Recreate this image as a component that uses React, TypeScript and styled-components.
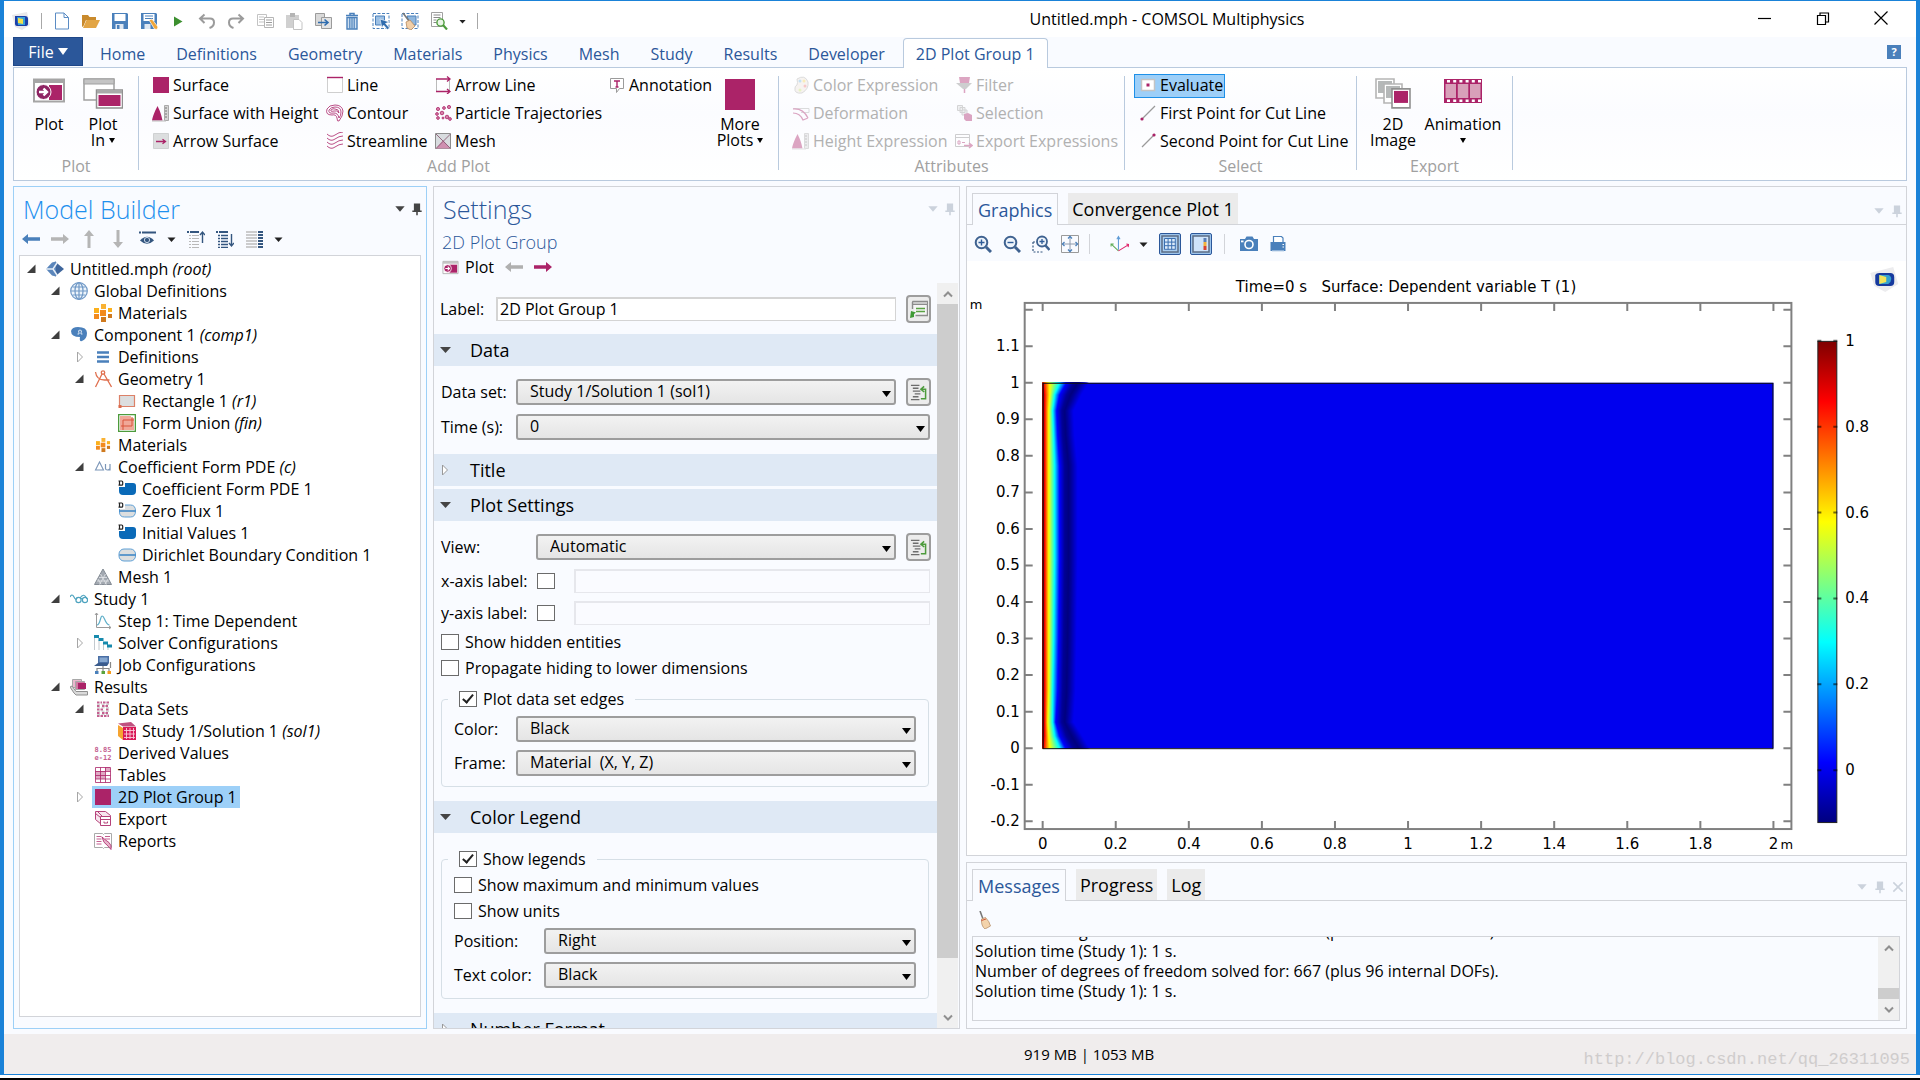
import React, { ReactNode, useId, useState } from "react";
import styled, { createGlobalStyle, css } from "styled-components";

const ui = `"Open Sans", "Noto Sans", "Segoe UI", sans-serif`;
const plotFont = `"DejaVu Sans", Verdana, sans-serif`;
const M = "#ab2368";
const B = "#4a80bb";
const N = "#34567f";
const G = "#9b9b9b";
const LINE = "#b9cade";
const GRAY_LINE = "#d2d4d9";

const Global = createGlobalStyle`
  *, *::before, *::after { box-sizing: border-box; }
  html, body, #root { height: 100%; }
  body { margin: 0; font-family: ${ui}; font-size: 16px; line-height: 20px; color: #000; background: #000; overflow: hidden; }
  button, input, select { font: inherit; color: inherit; }
  button { background: none; border: 0; padding: 0; cursor: default; }
  svg { display: block; flex: none; }
`;

/* ---------- icons ---------- */

const cube = (x: number, y: number, s: number, c: string, k: string) => (
  <rect key={k} x={x} y={y} width={s} height={s} fill={c} />
);

const materials = (
  <>
    {cube(7, 0, 5, "#f9b233", "a")}
    {cube(0, 4, 5, "#fbb01c", "b")}
    {cube(14, 4, 4, "#fbb01c", "c")}
    {cube(6, 6, 6, "#f28a1d", "d")}
    {cube(0, 10, 5, "#f28a1d", "e")}
    {cube(14, 10, 4, "#cf7a1f", "f")}
    {cube(7, 13, 5, "#cf7a1f", "g")}
  </>
);

const domainD = (
  <>
    <rect x="0" y="0" width="7" height="7" fill="#fff" />
    <path d="M.5 1h3.200a1 1 0 0 1 1 1v2.200a1 1 0 0 1-1 1H.5M1.500 1v4.500" fill="none" stroke="#222" strokeWidth="1.200" />
  </>
);

const gridLines = (n: number, w: number, step: number, off: number) =>
  Array.from({ length: n }, (_, i) => `M${off + i * step} ${off}v${w}M${off} ${off + i * step}h${w}`).join("");

const icons: Record<string, ReactNode> = {
  logo: (
    <>
      <path d="M0 3l15-3 3 13-8 5-7-3z" fill="#e8e8ea" />
      <path d="M3 4h10q3 0 3 3v5q0 2-3 2H5q-2 0-2-2z" fill="#1c3fa8" />
      <path d="M5 5h8v8H6z" fill="#37a0d8" />
      <path d="M6 6l5 1v5l-5-1z" fill="#f4e04a" />
    </>
  ),
  file: (
    <path d="M2.500 1h8.500l4.500 4.500V17h-13zM11 1v4.500h4.500" fill="#fff" stroke="#5b8cc4" />
  ),
  open: (
    <>
      <path d="M0 3h6l1.500 2H14v3H4L1.500 14 0 15z" fill="#c98a2c" />
      <path d="M4.500 8H18l-4 8H1z" fill="#e2a545" />
    </>
  ),
  save: (
    <>
      <path d="M1 1h15l1 1v15H1z" fill={B} />
      <path d="M3.500 2h11v7h-11z" fill="#fff" />
      <path d="M4.500 12h8v5h-8z" fill="#dfe8f2" />
      <path d="M6 13h2.500v4H6z" fill={B} />
    </>
  ),
  saveAs: (
    <>
      <path d="M1 1h15l1 1v15H1z" fill={B} />
      <path d="M3.500 2h11v7h-11z" fill="#fff" />
      <path d="M5 4h8M5 6.500h8" stroke={B} />
      <path d="M4.500 12h6v5h-6z" fill="#dfe8f2" />
      <path d="M9 8l3-1 6 8-1 2.500-2.500-.5z" fill="#f0a63a" stroke="#fff" strokeWidth=".7" />
    </>
  ),
  play: <path d="M5 4.500l8.500 5L5 14.500z" fill="#3c8f2f" />,
  undo: <path d="M6.500 2.500L2 6.500l4.500 4.500M2.500 6.500H12q4 0 4 4 0 4-4.500 5.500" fill="none" stroke={G} strokeWidth="2" />,
  redo: <path d="M11.500 2.500L16 6.500l-4.500 4.500M15.500 6.500H6q-4 0-4 4 0 4 4.500 5.500" fill="none" stroke={G} strokeWidth="2" />,
  copy: (
    <>
      <path d="M1.500 2.500h9v11h-9z" fill="#fff" stroke="#c3c3c3" />
      <path d="M3 5h5M3 7.500h5M3 10h5" stroke="#c3c3c3" />
      <path d="M8.500 5.500h9v10h-9z" fill="#fff" stroke="#b5b5b5" />
      <path d="M10 8h6M10 10.500h6M10 13h6" stroke={G} />
    </>
  ),
  paste: (
    <>
      <path d="M1 3h13v13H1z" fill="#d0d0d0" />
      <path d="M5 1h5v4H5z" fill="#b5b5b5" />
      <path d="M8.500 7.500h5.500l3 3v7H8.500z" fill="#fff" stroke="#c3c3c3" />
    </>
  ),
  duplicate: (
    <>
      <path d="M1.500 1.500h9v12h-9z" fill="#d9d9d9" stroke={G} />
      <path d="M7.500 5.500h10v11h-10z" fill="#e4e4e4" stroke={G} />
      <path d="M4 10.500h9M10.500 7.500l3.500 3-3.500 3" fill="none" stroke="#2f6cae" strokeWidth="1.600" />
    </>
  ),
  trash: (
    <>
      <path d="M3 3.500h12M7 3V1.500h4V3" fill="none" stroke={B} strokeWidth="1.500" />
      <path d="M4 5.500h10V17H4z" fill="#cfe0f1" stroke={B} strokeWidth="1.400" />
      <path d="M6.800 6v10.500M9 6v10.500M11.200 6v10.500" stroke={B} strokeWidth="1.200" />
    </>
  ),
  select: (
    <>
      <path d="M1 1.500h16v15H1z" fill="none" stroke={B} strokeDasharray="3 1.500" />
      <path d="M3.500 4h9v9h-9z" fill="#9cc0e4" stroke={B} />
      <path d="M8 7l9 3-3.500 1.500 4 4.500-2 1.500-4-4.500L10 16z" fill="#2f6cae" stroke="#fff" strokeWidth=".6" />
    </>
  ),
  clearSel: (
    <>
      <path d="M1 1.500h16v15H1z" fill="none" stroke={B} strokeDasharray="3 1.500" />
      <path d="M6 4h9v9h-6z" fill="#8fb6dd" stroke={B} />
      <path d="M2 1l6 8" stroke="#777" strokeWidth="1.500" />
      <path d="M5 10l4-2 5 6-4 4-4-2z" fill="#f1cfa8" stroke="#b48a62" strokeWidth=".8" />
    </>
  ),
  find: (
    <>
      <path d="M1.500.5h11v14h-11z" fill="#fff" stroke="#a0a0a0" />
      <path d="M3.500 3h7M3.500 5.500h7M3.500 8h3M3.500 10.500h3" stroke="#888" />
      <circle cx="10.500" cy="10.500" r="3.600" fill="#e9f5e6" stroke="#4d9b3c" strokeWidth="1.400" />
      <path d="M13 13l4 4.500" stroke="#4d9b3c" strokeWidth="2.200" />
    </>
  ),
  caret: <path d="M1 5h16L9 14z" fill="#222" />,
  surface: <rect x="1" y="1" width="16" height="16" fill={M} />,
  surfHeight: (
    <>
      <path d="M0 16.500C1 12 2 9 5.500 2 9 9 9.500 12 10.500 16.500z" fill={M} />
      <path d="M12.500 1.500h4v15h-4z" fill="#d5d5d5" stroke="#aaa" />
      <path d="M13 4h2M13 7h2M13 10h2M13 13h2" stroke="#777" />
      <path d="M0 17h14" stroke="#bbb" />
    </>
  ),
  arrowSurf: (
    <>
      <path d="M1.500 1.500h15v15h-15z" fill="#dcdedf" stroke="#cfd1d2" />
      <path d="M4 9.500h9M10.500 7.200l3 2.300-3 2.300" fill="none" stroke={M} strokeWidth="1.300" />
    </>
  ),
  line: (
    <>
      <path d="M1.500 1.500h15v15h-15z" fill="#fff" stroke="#cfcfcf" />
      <path d="M1 1.500h16" stroke={M} strokeWidth="1.400" />
    </>
  ),
  contour: (
    <g fill="none" stroke={M} strokeWidth=".8">
      <path d="M1 5q2-4 8-4 7 0 8 6 0 5-4 10-2 1-2-3-1-4-5-3-7 0-5-6z" />
      <path d="M3 6q2-3 6-3 6 0 6 5 0 4-2 6-1-5-5-5-6 1-5-3z" />
      <path d="M5 6q2-2 4-1 4 0 4 4-2-3-5-2-4 1-3-1z" />
    </g>
  ),
  streamline: (
    <g fill="none" stroke={M} strokeWidth=".8">
      {[3, 7, 11, 15].map((y) => (
        <path key={y} d={`M1 ${y - 1}q4 4 8 1t8-3`} />
      ))}
    </g>
  ),
  arrowLine: (
    <>
      <path d="M2.500 3v12M15.500 3v12" stroke="#bbb" />
      <path d="M2 3h13M2 15.500h13M13 .5l3 2.500-3 2.500M13 13l3 2.500-3 2.500" fill="none" stroke={M} strokeWidth="1.300" />
    </>
  ),
  particle: (
    <g fill="#d680a8" stroke={M} strokeWidth=".8">
      <circle cx="4" cy="5" r="1.600" /><circle cx="10" cy="4" r="1.400" /><circle cx="15" cy="3" r="1.600" />
      <circle cx="3" cy="10" r="1.400" /><circle cx="8" cy="9" r="1.800" /><circle cx="13" cy="13" r="1.800" />
      <circle cx="4" cy="14" r="1.400" /><circle cx="16" cy="15" r="1.400" /><circle cx="9" cy="14" r="1" />
    </g>
  ),
  mesh: (
    <>
      <path d="M1.500 1.500h15v15h-15z" fill="#d8dcdf" stroke="#8d8d8d" />
      <path d="M2 16.500L9 8l7.500 8.500z" fill="#cf8fb0" />
      <path d="M2 2l14.500 14.500M16.500 2L2 16.500" stroke="#8b5c75" strokeWidth=".9" />
    </>
  ),
  annotation: (
    <>
      <path d="M2.500 2.500h13v10h-4l-3 4v-4h-6z" fill="#fff" stroke={G} />
      <path d="M6 5h6M9 5v6M7.500 11h3" stroke={M} strokeWidth="1.400" />
    </>
  ),
  colorExp: (
    <>
      <path d="M5 3q8-5 11 3 1 7-6 11-8 1-7-5 0-2 2-3 1-2 0-6z" fill="#eee4dc" stroke="#aaa" />
      <circle cx="8" cy="5" r="1.500" fill="#6fb6e6" /><circle cx="12" cy="5" r="1.500" fill="#f3d24d" />
      <circle cx="13" cy="10" r="1.500" fill="#e77" /><circle cx="8" cy="14" r="1.500" fill="#c7e36a" />
    </>
  ),
  deformation: (
    <>
      <path d="M1 4.500h16v4H9" fill="none" stroke="#aaa" />
      <path d="M1 5q10-1 15 9M1 9q7 0 10 7l5-2" fill="none" stroke={M} strokeWidth="1.200" />
    </>
  ),
  filter: (
    <>
      <path d="M4 1h11l-1 6H5z" fill={M} />
      <path d="M1 7h16l-6 6H8z" fill="#888" />
      <path d="M9.500 13v4" stroke={M} strokeWidth="1.500" />
    </>
  ),
  selection: (
    <>
      <path d="M2.500 1.500h5v5h-5zM5 3.500h5v5H5zM7 6h5v5H7z" fill="#ddd" stroke="#999" />
      <path d="M9 10l4-1 4 2v6h-6l-2-2z" fill={M} />
    </>
  ),
  exportExp: (
    <>
      <path d="M.5 2.500h14v12H.5z" fill="#fff" stroke="#888" />
      <path d="M1 5.500h13" stroke="#888" />
      <path d="M3 9h2v3H3zM7 10.500h3" fill="none" stroke={M} />
      <path d="M9 13.500h7M14 11l3 2.500-3 2.500" fill="none" stroke={M} strokeWidth="1.500" />
    </>
  ),
  evaluate: (
    <>
      <path d="M2.500 3.500h13v11h-13z" fill="#fff" stroke="#c4c4c4" strokeWidth="1.500" />
      <rect x="7.500" y="7.500" width="3" height="3" fill={M} />
    </>
  ),
  firstPoint: (
    <>
      <path d="M3 15L16 2" stroke="#9a9a9a" strokeWidth="1.200" />
      <circle cx="3" cy="15" r="1.600" fill={M} />
    </>
  ),
  secondPoint: (
    <>
      <path d="M3 15L16 2" stroke="#9a9a9a" strokeWidth="1.200" />
      <circle cx="15" cy="3" r="1.600" fill={M} />
    </>
  ),
  back: <path d="M0 9l6-5v3.200h12v3.600H6V14z" fill="currentColor" />,
  fwd: <path d="M18 9l-6-5v3.200H0v3.600h12V14z" fill="currentColor" />,
  up: <path d="M9 0L4 6h3.500v12h3V6H14z" fill="currentColor" />,
  down: <path d="M9 18L4 12h3.500V0h3v12H14z" fill="currentColor" />,
  eye: (
    <>
      <path d="M1 2.500h2M4 2.500h14" stroke={N} strokeWidth="2" />
      <path d="M2 10.500Q9 3 16 10.500 9 17 2 10.500z" fill={N} />
      <circle cx="9" cy="10" r="2.600" fill={N} stroke="#cbd8e8" />
    </>
  ),
  collapseUp: (
    <>
      <path d="M0 2h2M3 2h9" stroke={N} strokeWidth="2" />
      <path d="M2 5.500h10M2 8.500h10M2 11.500h10M2 14.500h10M2 17.500h10" stroke="#b9b9b9" strokeDasharray="2 1 20" />
      <path d="M15.500 13V2M13 5l2.500-3L18 5" fill="none" stroke={N} strokeWidth="1.400" />
    </>
  ),
  expandDown: (
    <>
      <path d="M0 2h2M3 2h9" stroke={N} strokeWidth="2" />
      <path d="M2 5.500h10M2 8.500h10M2 11.500h10M2 14.500h10M2 17.500h10" stroke={N} strokeWidth="1.300" strokeDasharray="2 1 20" />
      <path d="M15.500 4v12M13 13l2.500 3 2.500-3" fill="none" stroke={N} strokeWidth="1.400" />
    </>
  ),
  columns: (
    <>
      <path d="M1 2h11M1 5h11M1 8h11M1 11h11M1 14h11M1 17h11" stroke="#bdbdbd" strokeWidth="1.500" />
      <path d="M13 2h5M13 5h5M13 8h5M13 11h5M13 14h5M13 17h5" stroke={N} strokeWidth="1.800" />
    </>
  ),
  root: (
    <>
      <path d="M9 1.500L18 9l-9 7.500z" fill="#3f669c" />
      <path d="M0 9l6-6.500 4-1v15l-4-1z" fill="#5b86bb" />
      <path d="M0 9h7l4-6M7 9l4 6" fill="none" stroke="#e6eef7" strokeWidth="1.500" />
    </>
  ),
  globe: (
    <g fill="none" stroke="#6f98c6" strokeWidth="1.200">
      <circle cx="9" cy="9" r="8.300" fill="#edf4fb" />
      <path d="M1 9h16M9 1v16M2.500 5h13M2.500 13h13" />
      <ellipse cx="9" cy="9" rx="4" ry="8.300" />
    </g>
  ),
  materials,
  materialsSmall: <g transform="translate(2 2) scale(.78)">{materials}</g>,
  component: (
    <>
      <path d="M1 5q1-4 7-4 9 0 9 6 0 6-5 8-3 1-2-4-9 0-9-6z" fill={B} />
      <path d="M7.500 8h1.500v-1q-1.500-3 1-3t1 3v1h1.500" fill="none" stroke="#dbe7f4" />
    </>
  ),
  definitions: <path d="M3 4.500h12M3 9h12M3 13.500h12" stroke={B} strokeWidth="2.600" />,
  geometry: (
    <g fill="none" stroke="#e0704f" strokeWidth="1.300">
      <circle cx="9" cy="2.500" r="1.700" />
      <path d="M8 4L1.500 17M10 4l7.500 13M1.500 2q1 8 9 8h5" />
    </g>
  ),
  rectangle: (
    <>
      <path d="M1.500 3.500h15v11h-15z" fill="#dcdedf" stroke="#dc8168" strokeWidth="1.200" />
      <rect x=".5" y="13" width="3" height="3" fill="#dc6a4a" />
    </>
  ),
  formUnion: (
    <>
      <path d="M.5.5h17v17H.5z" fill="#fff" stroke="#4d9b3c" strokeWidth="1.600" />
      <path d="M2 2h11v2h3v12H2z" fill="#f0a898" />
      <path d="M3 12h11V3M5 16V6h11" fill="none" stroke="#d9553a" />
    </>
  ),
  deltaU: (
    <>
      <path d="M1.500 12L5.500 4l4 8z" fill="none" stroke="#7b96b8" strokeWidth="1.100" />
      <path d="M11.500 6v4.500q0 1.500 2 1.500t2.500-1.500V6v6.500" fill="none" stroke="#7b96b8" strokeWidth="1.200" />
    </>
  ),
  domain: (
    <>
      <path d="M1 5q0-2 3-2h11q3 0 3 3v5q0 4-4 4H5q-4 0-4-4z" fill="#0a6ab8" />
      {domainD}
    </>
  ),
  flux: (
    <>
      <path d="M1.500 6q0-3 4-3h7q5 0 5 6t-5 6h-6q-5 0-5-5z" fill="#dcdedf" stroke="#5fa0d6" />
      <path d="M1.500 9h16" stroke="#1c74c0" strokeWidth="1.300" />
      {domainD}
    </>
  ),
  dirichlet: (
    <>
      <rect x="1" y="3" width="16.500" height="12" rx="5" fill="#dcdedf" stroke="#5fa0d6" />
      <path d="M1.500 9h16" stroke="#1c74c0" strokeWidth="1.300" />
    </>
  ),
  meshTree: (
    <>
      <path d="M9 1L.5 16.500h17z" fill="#a3a9b1" stroke="#848b94" />
      <path d="M6.500 6l6 10.500M4 11l3 5.500M11.500 6l-6 10.500M14 11l-3 5.500M5 9.500h8M3 13h12" stroke="#e3e6ea" strokeWidth=".8" />
    </>
  ),
  study: (
    <g fill="none" stroke="#4ea3bf" strokeWidth="1.200">
      <path d="M0 7q2-4 4 0t3 1" />
      <circle cx="8.500" cy="10" r="2.600" />
      <circle cx="15" cy="10" r="2.600" />
      <path d="M11 9q.8-1 1.500 0M10 8q4-6 7 1" />
    </g>
  ),
  timeDep: (
    <>
      <path d="M2.500 1v14.500H17M1 3l1.500-2L4 3M15 14l2 1.500-2 1.500" fill="none" stroke="#9a9a9a" />
      <path d="M3 13q2 0 3.500-6t4 0 5 6" fill="none" stroke="#5fafc9" strokeWidth="1.200" />
    </>
  ),
  solver: (
    <>
      <path d="M.5 4v12M5 6v10M9.500 9v7M14 12v4" stroke="#c3c9ce" />
      <path d="M0 1h5v3H0zM4.500 4h5v3h-5zM9 7.500h5v3H9zM13 10.500h5v3h-5z" fill="#178aad" />
    </>
  ),
  job: (
    <>
      <path d="M4 0h11v7H4z" fill="#4a6fa5" /><path d="M5.500 1.500h8v4.500h-8z" fill="#86a7cf" />
      <path d="M0 10l4-3h11l-2 3z" fill="#3a5b8c" />
      <path d="M16.500 6v6M3 15v-2.500h12V15M9 10v5" fill="none" stroke="#888" strokeWidth="1.200" />
      <path d="M1 15h3.500v3H1z" fill={B} /><path d="M7.500 15H11v3H7.500z" fill="#5aa33c" /><path d="M13.500 15H17v3h-3.500z" fill="#f59b1c" />
    </>
  ),
  results: (
    <>
      <path d="M2.500 1.500h9v8h-9z" fill="#e9b8ce" stroke="#a8a8a8" />
      <path d="M5.500 3.500h9v8h-9z" fill="#d27ba4" stroke="#a8a8a8" />
      <path d="M8 5h8v6H8z" fill={M} />
      <path d="M0 9l4 6 2 2h11.500v-3.500H6L2 8z" fill="#dadada" stroke="#909090" />
    </>
  ),
  dataSets: (
    <>
      <path d="M3 2.500h5M9 2.500h6M3 6h3M8 6h7M3 9.500h7M12 9.500h3M3 13h3M8 13h7M3 16h12" stroke="#c45f90" strokeWidth="1.800" strokeDasharray="2.500 1" />
      <path d="M3 4.300h12M3 7.800h12M3 11.200h12M3 14.600h12" stroke="#b9b9b9" strokeWidth=".8" strokeDasharray="3 1.500" />
    </>
  ),
  solution: (
    <>
      <path d="M0 3l5 3v12l-5-4z" fill="#f6a431" />
      <path d="M0 1.500L13 0l5 4.500H5z" fill="#c0517f" />
      <path d="M5 5h13v13H5z" fill="#d91a57" />
      <path d="M8.500 6v11M12 6v11M15.500 6v11M6 8.500h11M6 12h11M6 15.500h11" stroke="#f9cbd9" strokeWidth=".9" />
    </>
  ),
  derived: (
    <text x="9" y="8" textAnchor="middle" fontFamily="DejaVu Sans Mono, monospace" fontSize="7" fontWeight="700" fill="#c4608f">
      8.85
      <tspan x="9" y="16">e-12</tspan>
    </text>
  ),
  tables: (
    <>
      <path d="M1 1h16v16H1z" fill="#fff" />
      <path d="M1 5h5v8H1zM6 5h5v8H6zM11 1h5v4h-5z" fill="#d894b5" opacity=".8" />
      <path d="M1.500 1.500h15v15h-15zM6.500 1.500v15M11.500 1.500v15M1.500 5.500h15M1.500 9.500h15M1.500 13h15" fill="none" stroke={M} strokeWidth=".8" />
    </>
  ),
  exportTree: (
    <g fill="#f7e6ee" stroke="#b5427a">
      <path d="M1.500 1.500h10l5 4v9h-9l-6-5z" />
      <path d="M6.500 6.500h10v9h-10z" fill="#fff" />
      <path d="M6.500 9.500h10M10 11.500v1.500h3.500v-1.500M1.500 3.500l5 4M3.500 1.500l5 5" fill="none" />
    </g>
  ),
  reports: (
    <>
      <path d="M.5 1.500h8l1 1 1-1h7v14h-7l-1 1-1-1h-8z" fill="#fff" stroke="#aaa" />
      <path d="M2.500 4.500h5M2.500 7h5M2.500 9.500h5M2.500 12h5M11 4.500h5M11 7h5" stroke="#c45f90" />
      <path d="M8 5q1 6 6 9l3 3.500q1-4-2-7-3-2-7-5.500z" fill="#e7b4cb" stroke={M} strokeWidth=".8" />
    </>
  ),
  plotSmall: (
    <>
      <path d="M1 2.500h16v13H1z" fill="#fff" stroke="#b5b5b5" />
      <path d="M1 3h16v2H1z" fill="#c4c4c4" />
      <path d="M8 6h8v8.500H8z" fill={M} />
      <circle cx="6" cy="10" r="4" fill={M} stroke="#fff" strokeWidth=".8" />
      <path d="M3.500 10h4M6 8l2 2-2 2" fill="none" stroke="#fff" strokeWidth="1.100" />
    </>
  ),
  rename: (
    <>
      <path d="M2.500 1.500h15v14h-12" fill="#f5f5f5" stroke="#8c8c8c" strokeWidth="1.400" />
      <path d="M2.500 1.500h15v3h-15z" fill="#c9c9c9" stroke="#8c8c8c" />
      <path d="M2.500 2v7" stroke="#8c8c8c" strokeWidth="1.400" />
      <path d="M6 8.500h9M6 11.500h9" stroke="#5aa343" strokeWidth="1.300" />
      <path d="M0 18l1-7 5 1.500-2 1.500 0 3z" fill="#3f9b35" />
    </>
  ),
  goTo: (
    <>
      <path d="M1 1.500h9M3 4.500h6M3 7.500h8M5 10.500h6M3 13.500h6M1 16.500h9" stroke="#6d6d6d" strokeWidth="1.400" />
      <path d="M11.500 15.500h5v-10h-4M15 2.500l-3.500 3 3.500 3" fill="none" stroke="#4d9b3c" strokeWidth="1.600" />
    </>
  ),
  zoomIn: (
    <>
      <circle cx="7.500" cy="7.500" r="5.800" fill="#eef4fb" stroke="#3f6290" strokeWidth="2" />
      <path d="M4.500 7.500h6M7.500 4.500v6" stroke="#2f5c98" strokeWidth="1.400" />
      <path d="M12 12l5 5" stroke="#3f6290" strokeWidth="3" />
    </>
  ),
  zoomOut: (
    <>
      <circle cx="7.500" cy="7.500" r="5.800" fill="#eef4fb" stroke="#3f6290" strokeWidth="2" />
      <path d="M4.500 7.500h6" stroke="#2f5c98" strokeWidth="1.400" />
      <path d="M12 12l5 5" stroke="#3f6290" strokeWidth="3" />
    </>
  ),
  zoomBox: (
    <>
      <path d="M1 7v10h11M1 7h4" fill="none" stroke={N} strokeDasharray="2 1.500" strokeWidth="1.200" />
      <circle cx="10" cy="6.500" r="5" fill="#eef4fb" stroke="#3f6290" strokeWidth="1.800" />
      <path d="M7.500 6.500h5M10 4v5" stroke="#2f5c98" strokeWidth="1.300" />
      <path d="M13.500 10.500l4 4.500" stroke="#3f6290" strokeWidth="2.600" />
    </>
  ),
  zoomExtents: (
    <>
      <path d="M.5.5h17v17H.5z" fill="none" stroke="#9a9a9a" />
      <path d="M1 9h16M9 1v16" stroke="#8e9aab" />
      <path d="M7 3.500l2-2 2 2M7 14.500l2 2 2-2M3.500 7l-2 2 2 2M14.500 7l2 2-2 2" fill="none" stroke={B} strokeWidth="1.300" />
    </>
  ),
  axes: (
    <>
      <path d="M8 14V2M6.500 4L8 1.500 9.500 4" fill="none" stroke="#5e9bd6" />
      <path d="M8 15L1 8.500M1 11V8.500h2.500" fill="none" stroke="#5cab54" />
      <path d="M8 15l10-6M15.500 8.500L18 9l-1 2.500" fill="none" stroke="#e0246a" />
    </>
  ),
  gridOn: (
    <>
      <rect x="1" y="1" width="16" height="16" fill="#a9cdf0" stroke="#5c6c84" strokeWidth="1.500" />
      <path d="M3 3h12v12H3z" fill="#dcebfa" />
      <path d={gridLines(4, 11, 3.6, 3.5)} stroke="#3b6fb0" />
    </>
  ),
  legendOn: (
    <>
      <rect x="1" y="1" width="16" height="16" fill="#cfe4fb" stroke="#5c6c84" strokeWidth="1.500" />
      <path d="M11.500 3h3v4h-3z" fill="#5b7fb5" /><path d="M11.500 7h3v4h-3z" fill="#f3b23b" /><path d="M11.500 11h3v4h-3z" fill="#d8432f" />
    </>
  ),
  camera: (
    <>
      <path d="M0 4h5l1.500-2.500h6L14 4h4v12H0z" fill={B} />
      <circle cx="9" cy="9.500" r="4" fill={B} stroke="#fff" strokeWidth="1.600" />
      <rect x="1" y="5.500" width="2.500" height="1.800" fill="#fff" />
    </>
  ),
  printer: (
    <>
      <path d="M4.500 1.500h8l1.500 1.500v5h-9.500z" fill="#fff" stroke={B} strokeWidth="1.200" />
      <path d="M1.500 7h15v9h-15z" fill={B} />
      <path d="M3 15.500h12v1.500H3z" fill="#dbe7f4" />
      <path d="M13.500 9.500h1.500M13.500 12h1.500" stroke="#fff" strokeWidth="1.200" />
    </>
  ),
  broom: (
    <>
      <path d="M3 0l3 8" stroke="#777" strokeWidth="1.600" />
      <path d="M4.500 8l4-1.500q4 4 5 8.500l-5.500 3q-4-3-3.500-10z" fill="#f3d3ab" stroke="#b9936c" strokeWidth=".8" />
      <path d="M4.500 9.500l4.500-1.500" stroke="#d0563a" />
    </>
  ),
  pin: <path d="M5 2h8v9h2v2h-5v4H8v-4H3v-2h2z" fill="currentColor" />,
  menuTri: <path d="M2 5h14l-7 8z" fill="currentColor" />,
  closeX: <path d="M2 2l14 14M16 2L2 16" stroke="currentColor" strokeWidth="2.400" />,
};

const Icon = ({ name, size = 18, color }: { name: string; size?: number; color?: string }) => (
  <svg width={size} height={size} viewBox="0 0 18 18" color={color} aria-hidden="true">
    {icons[name]}
  </svg>
);

/* ---------- window frame ---------- */

const Screen = styled.div`
  height: 100vh;
  display: flex;
  flex-direction: column;
  border-bottom: 2px solid #000;
  background: #fff;
  padding-bottom: 3px;
`;
const Window = styled.div`
  flex: 1;
  min-height: 0;
  display: flex;
  flex-direction: column;
  border: solid #1a82d8;
  border-width: 1px 4px;
  background: #f9fbff;
`;
const TitleBar = styled.header`
  height: 36px;
  display: flex;
  align-items: center;
  background: #fff;
  padding-left: 8px;
`;
const QuickBar = styled.div`
  display: flex;
  align-items: center;
  gap: 11px;
  padding-top: 4px;
`;
const QuickButton = styled.button`
  display: grid;
  place-items: center;
  width: 18px;
  height: 24px;
`;
const Rule = styled.span<{ $h?: number; $c?: string; $gap?: number }>`
  width: 1px;
  height: ${(p) => p.$h ?? 16}px;
  margin: 0 ${(p) => p.$gap ?? 0}px;
  background: ${(p) => p.$c ?? "#a8a8a8"};
`;
const WindowTitle = styled.h1`
  flex: 1;
  margin: 0;
  padding-left: 120px;
  text-align: center;
  font-size: 16px;
  font-weight: 400;
`;
const WinButtons = styled.div`
  display: flex;
  padding: 0 6px 3px 0;
`;
const WinButton = styled.button`
  width: 58px;
  height: 32px;
  display: grid;
  place-items: center;
`;

/* ---------- ribbon ---------- */

const TabStrip = styled.nav`
  height: 30px;
  display: flex;
  align-items: stretch;
  margin: 0 9px;
`;
const FileButton = styled.button`
  width: 70px;
  height: 29px;
  background: #2b579a;
  border: 1px solid #1f4788;
  color: #fff;
  display: flex;
  align-items: center;
  justify-content: center;
  gap: 4px;
`;
const RibbonTab = styled.button<{ $active?: boolean }>`
  color: #2b579a;
  padding: 3px 14px 0 17px;
  white-space: nowrap;
  ${(p) =>
    p.$active &&
    css`
      position: relative;
      margin: 1px 0 -1px 4px;
      padding: 1px 12px 0;
      background: #fff;
      border: 1px solid ${LINE};
      border-bottom: 0;
      border-radius: 4px 4px 0 0;
    `}
`;
const Help = styled.button`
  align-self: center;
  margin: 0 6px 0 auto;
  width: 14px;
  height: 14px;
  background: ${B};
  color: #fff;
  font-size: 11px;
  line-height: 14px;
  font-weight: 700;
`;
const Ribbon = styled.section`
  height: 114px;
  margin: 0 9px;
  border: 1px solid ${LINE};
  background: linear-gradient(#fff, #fbfcff 40%, #fff);
  display: flex;
  padding: 8px 0 10px;
`;
const Group = styled.div<{ $w: number }>`
  width: ${(p) => p.$w}px;
  flex: none;
  border-right: 1px solid ${LINE};
  display: flex;
  flex-direction: column;
  justify-content: space-between;
`;
const GroupBody = styled.div<{ $cols: string; $pad: number }>`
  flex: 1;
  min-height: 0;
  display: grid;
  grid-template-columns: ${(p) => p.$cols};
  padding-left: ${(p) => p.$pad}px;
`;
const GroupLabel = styled.div`
  text-align: center;
  color: #a0a0a0;
  height: 13px;
  line-height: 18px;
  white-space: nowrap;
`;
const Stack = styled.div`
  display: flex;
  flex-direction: column;
  align-items: flex-start;
  gap: 4px;
  margin-top: -2px;
  height: 80px;
`;
const Item = styled.button<{ $on?: boolean }>`
  height: 24px;
  display: flex;
  align-items: center;
  gap: 3px;
  padding: 0 1px 2px 4px;
  white-space: nowrap;
  border: 1px solid ${(p) => (p.$on ? "#1e90e8" : "transparent")};
  background: ${(p) => (p.$on ? "#9dcff8" : "none")};
  &:disabled {
    color: #b1b1b1;
  }
  &:disabled svg {
    opacity: 0.4;
  }
`;
const Big = styled.button`
  display: flex;
  flex-direction: column;
  align-items: center;
  line-height: 16px;
  white-space: nowrap;
`;
const BigArt = styled.span`
  height: 40px;
  padding-top: 2px;
`;
const BigLine = styled.span`
  height: 16px;
  display: flex;
  align-items: center;
  gap: 4px;
`;

/* ---------- panels ---------- */

const Work = styled.main`
  flex: 1;
  min-height: 0;
  display: flex;
  gap: 6px;
  padding: 5px 9px;
`;
const Panel = styled.section<{ $w?: number; $h?: number; $active?: boolean }>`
  flex: ${(p) => (p.$w ? `0 0 ${p.$w}px` : p.$h ? `0 0 ${p.$h}px` : "1")};
  min-height: 0;
  min-width: 0;
  border: 1px solid ${(p) => (p.$active ? "#9dd0f7" : GRAY_LINE)};
  display: flex;
  flex-direction: column;
`;
const PanelHead = styled.div`
  height: 44px;
  display: flex;
  align-items: center;
  justify-content: space-between;
  padding: 0 2px 0 9px;
`;
const PanelTitle = styled.h2<{ $c: string }>`
  margin: 0;
  font-weight: 300;
  font-size: 25px;
  line-height: 32px;
  color: ${(p) => p.$c};
`;
const HeadTools = styled.div<{ $c: string }>`
  display: flex;
  gap: 4px;
  align-items: center;
  color: ${(p) => p.$c};
`;
const TreeTools = styled.div`
  height: 16px;
  padding-left: 8px;
  display: flex;
  align-items: center;
  gap: 11px;
`;
const TreeBox = styled.ul`
  flex: 1;
  margin: 8px 5px 11px;
  padding: 2px 0;
  border: 1px solid ${GRAY_LINE};
  background: #fff;
  list-style: none;
`;
const TreeRow = styled.li<{ $d: number }>`
  height: 22px;
  display: flex;
  align-items: center;
  padding-left: ${(p) => 4 + p.$d * 24}px;
`;
const Twist = styled.span`
  width: 14px;
  height: 14px;
  margin-right: 6px;
`;
const Node = styled.button<{ $on: boolean }>`
  height: 22px;
  display: flex;
  align-items: center;
  gap: 6px;
  padding: 0 3px 0 2px;
  white-space: pre;
  background: ${(p) => (p.$on ? "#9dd0f8" : "none")};
`;

/* ---------- settings ---------- */

const SubHead = styled.div`
  height: 22px;
  padding-left: 8px;
  font-size: 18px;
  font-weight: 300;
  line-height: 22px;
  color: #2b579a;
`;
const SetTools = styled.div`
  height: 30px;
  padding: 0 8px 2px;
  display: flex;
  align-items: center;
  gap: 11px;
`;
const PlotButton = styled.button`
  display: flex;
  align-items: center;
  gap: 6px;
`;
const ScrollArea = styled.div`
  flex: 1;
  min-height: 0;
  display: flex;
  padding-right: 1px;
`;
const ScrollBody = styled.div`
  flex: 1;
  min-width: 0;
  overflow: hidden;
`;
const Bar = styled.div`
  flex: 0 0 21px;
  background: #f0f0f0;
  display: flex;
  flex-direction: column;
  align-items: center;
`;
const Arrow = styled.button`
  height: 21px;
  display: grid;
  place-items: center;
`;
const Track = styled.div<{ $a: number; $b: number }>`
  flex: 1;
  align-self: stretch;
  display: flex;
  flex-direction: column;
  &::before {
    content: "";
    flex: ${(p) => p.$a};
  }
  &::after {
    content: "";
    flex: ${(p) => p.$b};
  }
`;
const Thumb = styled.div<{ $n: number }>`
  flex: ${(p) => p.$n};
  background: #cdcdcd;
`;
const SectionHead = styled.button`
  width: 100%;
  height: 32px;
  background: #dfe9f5;
  display: flex;
  align-items: center;
  gap: 19px;
  padding-left: 5px;
  font-size: 18px;
`;
const Body = styled.div<{ $top?: number; $bottom?: number }>`
  display: flex;
  flex-direction: column;
  gap: 8px;
  padding: ${(p) => p.$top ?? 12}px 7px ${(p) => p.$bottom ?? 14}px;
`;
const Row = styled.div<{ $label: number; $end?: boolean; $h?: number }>`
  display: grid;
  grid-template-columns: ${(p) => p.$label}px 1fr ${(p) => (p.$end ? "25px" : "")};
  align-items: center;
  height: ${(p) => p.$h ?? 26}px;
  margin-right: ${(p) => (p.$end ? -1 : 0)}px;
  white-space: nowrap;
`;
const SelectWrap = styled.span<{ $end?: boolean }>`
  position: relative;
  display: block;
  height: 26px;
  margin-right: ${(p) => (p.$end ? 10 : 0)}px;
`;
const Select = styled.select`
  appearance: none;
  width: 100%;
  height: 26px;
  padding: 0 24px 2px 12px;
  border: 2px solid #9d9d9d;
  border-radius: 3px;
  background: linear-gradient(#f2f2f2, #e5e5e5);
  outline: none;
`;
const SelectCaret = styled.svg`
  position: absolute;
  right: 5px;
  top: 12px;
  pointer-events: none;
`;
const TextInput = styled.input`
  height: 24px;
  min-width: 0;
  width: 100%;
  border: 2px solid #d4d4d4;
  border-right-width: 1px;
  border-bottom-width: 1px;
  background: #fff;
  padding: 0 2px;
  outline: none;
  &:disabled {
    background: #fafbff;
    border-color: #e6e7ec;
  }
`;
const SideButton = styled.button`
  width: 25px;
  height: 28px;
  border: 2px solid #9d9d9d;
  border-radius: 4px;
  background: #ececec;
  display: grid;
  place-items: center;
`;
const LabelRow = styled.div`
  height: 51px;
  padding: 0 6px;
  display: flex;
  align-items: center;
  & > label {
    width: 56px;
  }
  & > input {
    flex: 1;
    margin-right: 10px;
  }
`;
const AxisRow = styled.div`
  height: 24px;
  display: grid;
  grid-template-columns: 96px 37px 1fr;
  align-items: center;
  white-space: nowrap;
`;
const Check = styled.input`
  appearance: none;
  margin: 0;
  width: 18px;
  height: 16px;
  flex: none;
  border: 1px solid #6b6b6b;
  background: #fff;
  display: grid;
  place-items: center;
  &:checked::after {
    content: "";
    width: 6px;
    height: 11px;
    margin-top: -3px;
    border: solid #222;
    border-width: 0 2px 2px 0;
    transform: rotate(40deg);
  }
`;
const CheckLabel = styled.label`
  display: flex;
  align-items: center;
  gap: 6px;
  height: 18px;
`;
const Box = styled.fieldset<{ $top: number }>`
  margin: ${(p) => p.$top}px 1px 0 0;
  padding: 7px 12px 10px;
  min-width: 0;
  border: 1px solid #d6dfe6;
  border-radius: 4px;
  & > legend {
    height: 20px;
    padding: 0 11px;
    margin-left: -6px;
    display: flex;
    align-items: center;
  }
  & > div {
    display: flex;
    flex-direction: column;
    gap: 8px;
  }
`;

/* ---------- right side ---------- */

const RightCol = styled.div`
  flex: 1;
  min-width: 0;
  display: flex;
  flex-direction: column;
  gap: 6px;
`;
const Tabs = styled.div`
  height: 38px;
  padding: 6px 2px 0 5px;
  display: flex;
  gap: 10px;
  border-bottom: 1px solid ${GRAY_LINE};
`;
const Tab = styled.button<{ $on?: boolean }>`
  height: ${(p) => (p.$on ? 32 : 31)}px;
  padding: 0 ${(p) => (p.$on ? 5 : 4)}px;
  font-size: 18px;
  white-space: nowrap;
  color: ${(p) => (p.$on ? "#2b579a" : "#000")};
  background: ${(p) => (p.$on ? "#f9fbff" : "#ebebeb")};
  border: ${(p) => (p.$on ? `1px solid ${GRAY_LINE}` : "0")};
  border-bottom: 0;
`;
const TabTools = styled.div`
  margin: 6px 0 0 auto;
  display: flex;
  gap: 5px;
  align-items: center;
  color: #cbd2dc;
  height: 24px;
`;
const GraphTools = styled.div`
  height: 36px;
  display: flex;
  align-items: center;
  gap: 10px;
  padding: 2px 0 0 6px;
`;
const ToolButton = styled.button<{ $on?: boolean }>`
  width: 19px;
  height: 22px;
  display: grid;
  place-items: center;
  ${(p) =>
    p.$on &&
    css`
      width: 22px;
      border: 1px solid #2b579a;
      border-radius: 2px;
      background: #9cc4ec;
      margin: 0 -2px 0 1px;
    `}
`;
const Canvas = styled.div`
  flex: 1;
  min-height: 0;
  background: #fff;
  & > svg {
    width: 100%;
    height: 100%;
  }
`;
const MsgTools = styled.div`
  height: 35px;
  padding: 2px 10px 0;
  display: flex;
  align-items: center;
`;
const MsgBox = styled.div`
  flex: 1;
  min-height: 0;
  margin: 0 6px 7px 5px;
  border: 1px solid ${GRAY_LINE};
  display: flex;
`;
const MsgText = styled.div`
  flex: 1;
  overflow: hidden;
  display: flex;
  flex-direction: column;
  justify-content: flex-end;
  padding: 0 2px 19px;
  p {
    margin: 0;
    flex: none;
  }
`;
const Status = styled.footer`
  height: 40px;
  background: #f0eded;
  display: flex;
  align-items: center;
  justify-content: space-between;
  padding: 0 6px 0 1020px;
  font-size: 15px;
`;
const Mark = styled.span`
  font-family: "Liberation Mono", monospace;
  font-size: 17px;
  color: #cfcccc;
  padding-top: 12px;
`;

/* ---------- data ---------- */

type TreeItem = [depth: number, state: "open" | "shut" | "", icon: string, text: string, tag?: string];
const tree: TreeItem[] = [
  [0, "open", "root", "Untitled.mph", "(root)"],
  [1, "open", "globe", "Global Definitions"],
  [2, "", "materials", "Materials"],
  [1, "open", "component", "Component 1", "(comp1)"],
  [2, "shut", "definitions", "Definitions"],
  [2, "open", "geometry", "Geometry 1"],
  [3, "", "rectangle", "Rectangle 1", "(r1)"],
  [3, "", "formUnion", "Form Union", "(fin)"],
  [2, "", "materialsSmall", "Materials"],
  [2, "open", "deltaU", "Coefficient Form PDE", "(c)"],
  [3, "", "domain", "Coefficient Form PDE 1"],
  [3, "", "flux", "Zero Flux 1"],
  [3, "", "domain", "Initial Values 1"],
  [3, "", "dirichlet", "Dirichlet Boundary Condition 1"],
  [2, "", "meshTree", "Mesh 1"],
  [1, "open", "study", "Study 1"],
  [2, "", "timeDep", "Step 1: Time Dependent"],
  [2, "shut", "solver", "Solver Configurations"],
  [2, "", "job", "Job Configurations"],
  [1, "open", "results", "Results"],
  [2, "open", "dataSets", "Data Sets"],
  [3, "", "solution", "Study 1/Solution 1", "(sol1)"],
  [2, "", "derived", "Derived Values"],
  [2, "", "tables", "Tables"],
  [2, "shut", "surface", "2D Plot Group 1"],
  [2, "", "exportTree", "Export"],
  [2, "", "reports", "Reports"],
];

const TwistMark = ({ state }: { state: string }) => (
  <Twist>
    <svg width="14" height="14" viewBox="0 0 14 14" aria-hidden="true">
      {state === "open" && <path d="M3 11h8.500V2.500z" fill="#3f3f3f" />}
      {state === "shut" && <path d="M5.500 2v10l5-5z" fill="#fff" stroke="#a6a6a6" />}
    </svg>
  </Twist>
);

/* ---------- small controls ---------- */

const Drop = ({ label, value, width, goTo, tall }: { label: string; value: string; width: number; goTo?: boolean; tall?: boolean }) => {
  const id = useId();
  return (
    <Row $label={width} $end={goTo} $h={tall ? 28 : 26}>
      <label htmlFor={id}>{label}</label>
      <SelectWrap $end={goTo}>
        <Select id={id} defaultValue={value}>
          <option>{value}</option>
        </Select>
        <SelectCaret width="9" height="6" viewBox="0 0 9 6" aria-hidden="true">
          <path d="M0 0h9L4.500 6z" />
        </SelectCaret>
      </SelectWrap>
      {goTo && (
        <SideButton aria-label="Go to source">
          <Icon name="goTo" size={17} />
        </SideButton>
      )}
    </Row>
  );
};

const Tick = ({ label, on }: { label: string; on?: boolean }) => (
  <CheckLabel>
    <Check type="checkbox" defaultChecked={on} />
    {label}
  </CheckLabel>
);

const Axis = ({ label }: { label: string }) => {
  const id = useId();
  return (
    <AxisRow>
      <label htmlFor={id}>{label}</label>
      <Check type="checkbox" id={id} />
      <TextInput disabled aria-label={label} />
    </AxisRow>
  );
};

const Head = ({ title, open }: { title: string; open?: boolean }) => (
  <SectionHead aria-expanded={!!open}>
    <svg width="12" height="14" viewBox="0 0 12 14" aria-hidden="true">
      {open ? <path d="M1 4h11L6.500 10z" fill="#444" /> : <path d="M3.500 2v10l5-5z" fill="#fff" stroke="#999" />}
    </svg>
    {title}
  </SectionHead>
);

const Chevron = ({ up }: { up?: boolean }) => (
  <Arrow aria-label={up ? "Scroll up" : "Scroll down"}>
    <svg width="10" height="8" viewBox="0 0 10 8" aria-hidden="true">
      <path d={up ? "M1 6.500l4-4 4 4" : "M1 1.500l4 4 4-4"} fill="none" stroke="#8f8f8f" strokeWidth="2" />
    </svg>
  </Arrow>
);

const ScrollBar = ({ a, n, b }: { a: number; n: number; b: number }) => (
  <Bar>
    <Chevron up />
    <Track $a={a} $b={b}>
      <Thumb $n={n} />
    </Track>
    <Chevron />
  </Bar>
);

/* ---------- plot ---------- */

const X0 = 75;
const X1 = 807;
const Y1 = 122;
const Y0 = 488;
const FRAME = { l: 57, r: 825, t: 42, b: 569 };

const bandColors = [
  [127, 0, 0],
  [255, 0, 0],
  [255, 255, 0],
  [0, 255, 255],
  [0, 0, 255],
  [0, 0, 150],
  [0, 0, 128],
  [0, 0, 160],
  [0, 0, 238],
];
/* y position, then the distance from the left edge at which each band colour is reached */
const profile: [number, number[]][] = [
  [122, [0, 1, 7, 17, 24, 31, 35, 39, 46]],
  [134, [0, 2, 7, 12, 17, 24, 28, 32, 39]],
  [150, [0, 2, 6, 10, 14, 19, 22, 25, 31]],
  [175, [0, 2, 6, 11, 15, 20, 23, 26, 32]],
  [205, [0, 2, 6, 12, 17, 22, 26, 29, 35]],
  [300, [0, 2, 6, 12, 17, 22, 26, 29, 35]],
  [380, [0, 2, 6, 11, 16, 21, 25, 28, 34]],
  [430, [0, 2, 6, 10, 15, 20, 24, 27, 33]],
  [462, [0, 2, 5, 10, 13, 19, 22, 25, 31]],
  [476, [0, 2, 6, 12, 17, 24, 29, 33, 40]],
  [488, [0, 1, 7, 17, 23, 31, 36, 40, 47]],
];

const bands = (() => {
  const out: { d: string; fill: string }[] = [];
  const steps = 10;
  for (let s = bandColors.length - 2; s >= 0; s--) {
    for (let k = steps - 1; k >= 0; k--) {
      const mix = (from: number, to: number, f: number) => from + (to - from) * f;
      const c = bandColors[s].map((v, i) => Math.round(mix(v, bandColors[s + 1][i], (k + 0.5) / steps)));
      const pts = profile.map(([y, xs]) => `${(X0 + mix(xs[s], xs[s + 1], (k + 1) / steps)).toFixed(2)} ${y}`);
      out.push({ d: `M${X0} ${Y1}L${pts.join("L")}L${X0} ${Y0}z`, fill: `rgb(${c.join(",")})` });
    }
  }
  return out;
})();

const xTicks = Array.from({ length: 11 }, (_, i) => ({ x: X0 + (i * (X1 - X0)) / 10, t: i === 0 ? "0" : String(Number((i * 0.2).toFixed(1))) }));
const yTicks = Array.from({ length: 15 }, (_, i) => {
  const v = Number((-0.2 + i * 0.1).toFixed(1));
  return { y: Y0 - v * (Y0 - Y1), t: v === 1.2 ? "" : String(v === 0 ? 0 : v) };
});

const Plot = () => (
  <svg viewBox="0 0 939 595" preserveAspectRatio="xMidYMid meet" fontFamily={plotFont} fontSize="15" role="img" aria-label="Surface plot">
    <defs>
      <linearGradient id="jet" x1="0" y1="1" x2="0" y2="0">
        <stop offset="0" stopColor="#00007f" />
        <stop offset=".125" stopColor="#0000ff" />
        <stop offset=".375" stopColor="#00ffff" />
        <stop offset=".625" stopColor="#ffff00" />
        <stop offset=".875" stopColor="#ff0000" />
        <stop offset="1" stopColor="#7f0000" />
      </linearGradient>
    </defs>
    <text x="439" y="31" textAnchor="middle">
      {"Time=0 s\u00a0\u00a0\u00a0Surface: Dependent variable T (1)"}
    </text>
    <text x="2" y="48" fontSize="13">m</text>
    <rect x={X0} y={Y1} width={X1 - X0} height={Y0 - Y1} fill="#0000ee" />
    {bands.map((b, i) => (
      <path key={i} d={b.d} fill={b.fill} />
    ))}
    <rect x={X0 + 0.5} y={Y1 + 0.5} width={X1 - X0 - 1} height={Y0 - Y1} fill="none" stroke="#111" />
    <g stroke="#808080" strokeWidth="2" fill="none">
      <rect x={FRAME.l} y={FRAME.t} width={FRAME.r - FRAME.l} height={FRAME.b - FRAME.t} />
      {xTicks.map((t) => (
        <path key={t.t} d={`M${t.x} ${FRAME.t}v8M${t.x} ${FRAME.b}v-8`} />
      ))}
      {yTicks.map((t, i) => (
        <path key={i} d={`M${FRAME.l} ${t.y}h8M${FRAME.r} ${t.y}h-8`} />
      ))}
    </g>
    {xTicks.map((t) => (
      <text key={t.t} x={t.x} y="589" textAnchor="middle">
        {t.t}
      </text>
    ))}
    <text x="814" y="589" fontSize="13">m</text>
    {yTicks.map((t, i) => (
      <text key={i} x="52" y={t.y + 5} textAnchor="end">
        {t.t}
      </text>
    ))}
    <rect x="851.5" y="80.500" width="19" height="482" fill="url(#jet)" stroke="#222" />
    {["1", "0.8", "0.6", "0.4", "0.2", "0"].map((t, i) => (
      <g key={t}>
        <path d={`M851 ${80 + i * 86}h4M871 ${80 + i * 86}h-4`} stroke="#000" strokeOpacity=".55" strokeWidth="2" />
        <text x="879" y={85 + i * 86}>
          {t}
        </text>
      </g>
    ))}
    <g transform="translate(904 6)">
      <path d="M0 6l23-6 5 17-13 8-11-6z" fill="#ececee" />
      <path d="M5 8q1-2 4-2h11q4 0 4 4v5q0 4-4 4H9q-4 0-4-4z" fill="#173a9e" />
      <path d="M9 8h9q3 1 3 4t-3 5H9z" fill="#35a3cf" />
      <path d="M9 8l7 2v5l-7 2z" fill="#f3e359" />
    </g>
  </svg>
);

/* ---------- ribbon content ---------- */

const PlotArt = () => (
  <svg width="32" height="26" viewBox="0 0 32 26" aria-hidden="true">
    <path d="M1 1.500h30v22H1z" fill="#fff" stroke="#a5a5a5" strokeWidth="2" />
    <path d="M1 1h30v4H1z" fill="#a5a5a5" />
    <path d="M16 7h13v15H16z" fill={M} />
    <circle cx="10.500" cy="14" r="7.500" fill="#8e2463" stroke="#fff" />
    <path d="M6 14h7M10.500 10.500L14 14l-3.500 3.500" fill="none" stroke="#fff" strokeWidth="2.400" />
  </svg>
);
const PlotInArt = () => (
  <svg width="40" height="31" viewBox="0 0 40 31" aria-hidden="true">
    <path d="M1 1h30v21H1z" fill="#fff" stroke="#a0a0a0" strokeWidth="1.500" />
    <path d="M1 1h30v5H1z" fill="#c4c4c4" stroke="#a0a0a0" />
    <path d="M13.500 12h26v18h-26z" fill="#fff" stroke="#909090" strokeWidth="1.500" />
    <path d="M14 12h25v3.500H14z" fill="#a9a9a9" />
    <path d="M15.500 17h22v11h-22z" fill={M} />
  </svg>
);
const ImageArt = () => (
  <svg width="36" height="32" viewBox="0 0 36 32" aria-hidden="true">
    {[0, 8, 16].map((o, i) => (
      <g key={o}>
        <path d={`M${o + 1} ${o * 0.62 + 1}h18v19h-18z`} fill="#fff" stroke={i === 2 ? "#909090" : "#b5b5b5"} strokeWidth="1.600" />
        <path d={`M${o + 3} ${o * 0.62 + 3}h14v12h-14z`} fill={i === 2 ? M : "#b5b8b8"} />
      </g>
    ))}
  </svg>
);
const FilmArt = () => (
  <svg width="38" height="26" viewBox="0 0 38 26" aria-hidden="true">
    <path d="M0 1h38v24H0z" fill={M} />
    <path d="M1.500 6h10.500v14H1.500zM13.800 6h10.500v14H13.800zM26 6h10.500v14H26z" fill="#d8a0b9" />
    <path d="M3 3.300h34M3 22.700h34" stroke="#fff" strokeWidth="2.500" strokeDasharray="3 3.200" />
  </svg>
);
const BigCaret = () => (
  <svg width="6" height="5" viewBox="0 0 6 5" aria-hidden="true">
    <path d="M0 0h6L3 5z" />
  </svg>
);

const items = (list: [string, string][], disabled?: boolean, active?: string) => (
  <Stack>
    {list.map(([icon, text]) => (
      <Item key={text} disabled={disabled} $on={text === active}>
        <Icon name={icon} />
        {text}
      </Item>
    ))}
  </Stack>
);

export default function App() {
  const [selected, setSelected] = useState("2D Plot Group 1");
  return (
    <>
      <Global />
      <Screen>
        <Window>
          <TitleBar>
            <QuickBar>
              <Icon name="logo" />
              <Rule />
              {["file", "open", "save", "saveAs", "play", "undo", "redo", "copy", "paste", "duplicate", "trash", "select", "clearSel", "find"].map((n) => (
                <QuickButton key={n} aria-label={n}>
                  <Icon name={n} />
                </QuickButton>
              ))}
              <Icon name="caret" size={7} />
              <Rule />
            </QuickBar>
            <WindowTitle>Untitled.mph - COMSOL Multiphysics</WindowTitle>
            <WinButtons>
              {["M0 7.500h13", "M1.500 4.500h8v9h-8zM4 4.500v-2.500h8.500v9H10", "M.5.5l13 13M13.500.5l-13 13"].map((d, i) => (
                <WinButton key={d} aria-label={["Minimize", "Restore", "Close"][i]}>
                  <svg width="14" height="14" viewBox="0 0 14 14">
                    <path d={d} fill="none" stroke="#000" strokeWidth="1.200" />
                  </svg>
                </WinButton>
              ))}
            </WinButtons>
          </TitleBar>
          <TabStrip>
            <FileButton>
              File
              <svg width="10" height="8" viewBox="0 0 10 8" aria-hidden="true">
                <path d="M0 0h10L5 7z" fill="#fff" />
              </svg>
            </FileButton>
            {["Home", "Definitions", "Geometry", "Materials", "Physics", "Mesh", "Study", "Results", "Developer"].map((t) => (
              <RibbonTab key={t}>{t}</RibbonTab>
            ))}
            <RibbonTab $active>2D Plot Group 1</RibbonTab>
            <Help aria-label="Help">?</Help>
          </TabStrip>
          <Ribbon>
            <Group $w={125}>
              <GroupBody $cols="50px 58px" $pad={10}>
                <Big>
                  <BigArt><PlotArt /></BigArt>
                  <BigLine>Plot</BigLine>
                </Big>
                <Big>
                  <BigArt><PlotInArt /></BigArt>
                  <BigLine>Plot</BigLine>
                  <BigLine>In <BigCaret /></BigLine>
                </Big>
              </GroupBody>
              <GroupLabel>Plot</GroupLabel>
            </Group>
            <Group $w={640}>
              <GroupBody $cols="174px 108px 174px 107px 60px" $pad={8}>
                {items([["surface", "Surface"], ["surfHeight", "Surface with Height"], ["arrowSurf", "Arrow Surface"]])}
                {items([["line", "Line"], ["contour", "Contour"], ["streamline", "Streamline"]])}
                {items([["arrowLine", "Arrow Line"], ["particle", "Particle Trajectories"], ["mesh", "Mesh"]])}
                {items([["annotation", "Annotation"]])}
                <Big>
                  <BigArt>
                    <svg width="30" height="32" viewBox="0 0 30 32" aria-hidden="true">
                      <rect y="1" width="30" height="31" fill={M} />
                    </svg>
                  </BigArt>
                  <BigLine>More</BigLine>
                  <BigLine>Plots <BigCaret /></BigLine>
                </Big>
              </GroupBody>
              <GroupLabel>Add Plot</GroupLabel>
            </Group>
            <Group $w={346}>
              <GroupBody $cols="163px 170px" $pad={8}>
                {items([["colorExp", "Color Expression"], ["deformation", "Deformation"], ["surfHeight", "Height Expression"]], true)}
                {items([["filter", "Filter"], ["selection", "Selection"], ["exportExp", "Export Expressions"]], true)}
              </GroupBody>
              <GroupLabel>Attributes</GroupLabel>
            </Group>
            <Group $w={232}>
              <GroupBody $cols="1fr" $pad={9}>
                {items([["evaluate", "Evaluate"], ["firstPoint", "First Point for Cut Line"], ["secondPoint", "Second Point for Cut Line"]], false, "Evaluate")}
              </GroupBody>
              <GroupLabel>Select</GroupLabel>
            </Group>
            <Group $w={156}>
              <GroupBody $cols="60px 80px" $pad={6}>
                <Big>
                  <BigArt><ImageArt /></BigArt>
                  <BigLine>2D</BigLine>
                  <BigLine>Image</BigLine>
                </Big>
                <Big>
                  <BigArt><FilmArt /></BigArt>
                  <BigLine>Animation</BigLine>
                  <BigLine><BigCaret /></BigLine>
                </Big>
              </GroupBody>
              <GroupLabel>Export</GroupLabel>
            </Group>
          </Ribbon>

          <Work>
            <Panel $w={414} $active>
              <PanelHead>
                <PanelTitle $c="#1e90ee">Model Builder</PanelTitle>
                <HeadTools $c="#444">
                  <Icon name="menuTri" size={12} />
                  <Icon name="pin" size={14} />
                </HeadTools>
              </PanelHead>
              <TreeTools>
                <Icon name="back" color={B} />
                <Icon name="fwd" color="#b5b5b5" />
                <Icon name="up" color="#b5b5b5" />
                <Icon name="down" color="#b5b5b5" />
                <Icon name="eye" />
                <Icon name="caret" size={9} />
                <Icon name="collapseUp" />
                <Icon name="expandDown" />
                <Icon name="columns" />
                <Icon name="caret" size={9} />
              </TreeTools>
              <TreeBox>
                {tree.map(([d, state, icon, text, tag], i) => (
                  <TreeRow key={i} $d={d}>
                    <TwistMark state={state} />
                    <Node $on={selected === text} onClick={() => setSelected(text)}>
                      <Icon name={icon} />
                      <span>
                        {text}
                        {tag && <em> {tag}</em>}
                      </span>
                    </Node>
                  </TreeRow>
                ))}
              </TreeBox>
            </Panel>

            <Panel $w={527}>
              <PanelHead>
                <PanelTitle $c="#2b579a">Settings</PanelTitle>
                <HeadTools $c="#cbd2dc">
                  <Icon name="menuTri" size={12} />
                  <Icon name="pin" size={14} />
                </HeadTools>
              </PanelHead>
              <SubHead>2D Plot Group</SubHead>
              <SetTools>
                <PlotButton>
                  <Icon name="plotSmall" size={17} />
                  Plot
                </PlotButton>
                <Icon name="back" color="#b0b0b0" />
                <Icon name="fwd" color={M} />
              </SetTools>
              <ScrollArea>
                <ScrollBody>
                  <LabelRow>
                    <label htmlFor="plot-label">Label:</label>
                    <TextInput id="plot-label" defaultValue="2D Plot Group 1" />
                    <SideButton aria-label="Rename">
                      <Icon name="rename" />
                    </SideButton>
                  </LabelRow>
                  <Head title="Data" open />
                  <Body>
                    <Drop label="Data set:" value="Study 1/Solution 1 (sol1)" width={75} goTo tall />
                    <Drop label="Time (s):" value="0" width={75} />
                  </Body>
                  <Head title="Title" />
                  <Body $top={0} $bottom={3} />
                  <Head title="Plot Settings" open />
                  <Body>
                    <Drop label="View:" value="Automatic" width={95} goTo tall />
                    <Axis label="x-axis label:" />
                    <Axis label="y-axis label:" />
                    <Tick label="Show hidden entities" />
                    <Tick label="Propagate hiding to lower dimensions" />
                    <Box $top={4}>
                      <legend>
                        <Tick label="Plot data set edges" on />
                      </legend>
                      <div>
                        <Drop label="Color:" value="Black" width={62} />
                        <Drop label="Frame:" value={"Material\u00a0 (X, Y, Z)"} width={62} />
                      </div>
                    </Box>
                  </Body>
                  <Head title="Color Legend" open />
                  <Body $top={16}>
                    <Box $top={0}>
                      <legend>
                        <Tick label="Show legends" on />
                      </legend>
                      <div>
                        <Tick label="Show maximum and minimum values" />
                        <Tick label="Show units" />
                        <Drop label="Position:" value="Right" width={90} />
                        <Drop label="Text color:" value="Black" width={90} />
                      </div>
                    </Box>
                  </Body>
                  <Head title="Number Format" />
                </ScrollBody>
                <ScrollBar a={0} n={653} b={49} />
              </ScrollArea>
            </Panel>

            <RightCol>
              <Panel>
                <Tabs>
                  <Tab $on>Graphics</Tab>
                  <Tab>Convergence Plot 1</Tab>
                  <TabTools>
                    <Icon name="menuTri" size={12} />
                    <Icon name="pin" size={14} />
                  </TabTools>
                </Tabs>
                <GraphTools>
                  {["zoomIn", "zoomOut", "zoomBox", "zoomExtents"].map((n) => (
                    <ToolButton key={n} aria-label={n}>
                      <Icon name={n} />
                    </ToolButton>
                  ))}
                  <Rule $h={20} $c={GRAY_LINE} />
                  <span />
                  <ToolButton aria-label="View orientation">
                    <Icon name="axes" size={19} />
                  </ToolButton>
                  <Icon name="caret" size={9} />
                  <ToolButton $on aria-label="Show grid">
                    <Icon name="gridOn" />
                  </ToolButton>
                  <ToolButton $on aria-label="Show legend">
                    <Icon name="legendOn" />
                  </ToolButton>
                  <Rule $h={20} $c={GRAY_LINE} $gap={4} />
                  <ToolButton aria-label="Image snapshot">
                    <Icon name="camera" />
                  </ToolButton>
                  <ToolButton aria-label="Print">
                    <Icon name="printer" />
                  </ToolButton>
                </GraphTools>
                <Canvas>
                  <Plot />
                </Canvas>
              </Panel>
              <Panel $h={167}>
                <Tabs>
                  <Tab $on>Messages</Tab>
                  <Tab>Progress</Tab>
                  <Tab>Log</Tab>
                  <TabTools>
                    <Icon name="menuTri" size={12} />
                    <Icon name="pin" size={14} />
                    <Icon name="closeX" size={12} />
                  </TabTools>
                </Tabs>
                <MsgTools>
                  <Icon name="broom" />
                </MsgTools>
                <MsgBox>
                  <MsgText>
                    <p>Number of degrees of freedom solved for: 667 (plus 96 internal DOFs).</p>
                    <p>Solution time (Study 1): 1 s.</p>
                    <p>Number of degrees of freedom solved for: 667 (plus 96 internal DOFs).</p>
                    <p>Solution time (Study 1): 1 s.</p>
                  </MsgText>
                  <ScrollBar a={31} n={11} b={0} />
                </MsgBox>
              </Panel>
            </RightCol>
          </Work>

          <Status>
            <span>919 MB | 1053 MB</span>
            <Mark>http://blog.csdn.net/qq_26311095</Mark>
          </Status>
        </Window>
      </Screen>
    </>
  );
}
